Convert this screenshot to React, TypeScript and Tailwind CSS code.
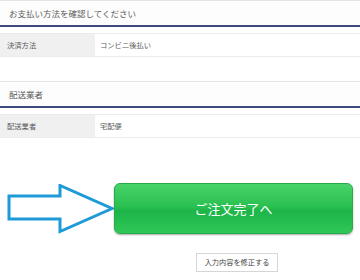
export default function App() {
  const font = { fontFamily: '"Noto Sans CJK JP", "Noto Sans", sans-serif' };

  const sections = [
    { title: "お支払い方法を確認してください", label: "決済方法", value: "コンビニ後払い" },
    { title: "配送業者", label: "配送業者", value: "宅配便" },
  ];

  return (
    <div className="w-[360px] h-[280px] bg-white overflow-hidden flex flex-col" style={font}>
      {sections.map((s, i) => (
        <section key={i} className={i === 0 ? "" : "mt-[24px]"}>
          <div className="h-[25px] border-t border-[#e4e4e4] bg-[#fdfdfd] flex items-center pl-[9px] text-[8.5px] text-[#5a5a5a]">
            {s.title}
          </div>
          <div className="h-[2px] bg-[#3c4a7d]" />
          <div className="mt-[6px] h-[24px] border-y border-[#ebebeb] flex text-[7.3px] text-[#5a5a5a]">
            <div className="w-[95px] bg-[#f0f0f0] pl-[7px] flex items-center">{s.label}</div>
            <div className="pl-[5px] flex items-center">{s.value}</div>
          </div>
        </section>
      ))}

      {/* 矢印と完了ボタン */}
      <div className="mt-[45px] flex items-center pl-[7px]">
        <svg width="107" height="50" viewBox="0 0 107 50" className="shrink-0">
          <polygon
            points="2,12 53,12 53,1.5 105,24.5 53,47.5 53,35 2,35"
            fill="white"
            stroke="#1f9ad8"
            strokeWidth="3"
            strokeLinejoin="miter"
          />
        </svg>
        <button className="w-[239px] h-[51px] rounded-[6px] border border-[#27aa48] bg-[linear-gradient(to_bottom,#48d369,#2bc052_45%,#1db548_55%,#2fc757)] shadow-[0_1px_2px_rgba(0,0,0,0.35)] text-white text-[13px] flex items-center justify-center">
          ご注文完了へ
        </button>
      </div>

      <div className="mt-[19px] flex justify-center pl-[116px] pr-[2px]">
        <button className="h-[19px] px-[8px] border border-[#d6d6d6] bg-white text-[7.2px] text-[#444] flex items-center">
          入力内容を修正する
        </button>
      </div>
    </div>
  );
}
